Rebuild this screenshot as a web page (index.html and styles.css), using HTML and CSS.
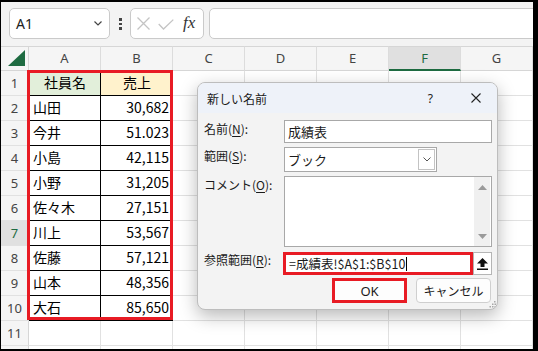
FILE: index.html
```html
<!DOCTYPE html>
<html lang="ja">
<head>
<meta charset="utf-8">
<title>新しい名前</title>
<link rel="stylesheet" href="styles.css">
</head>
<body>
<div class="frame">
  <div class="toolbar">
    <div class="namebox">
      <span class="ref">A1</span>
      <svg class="chev" width="8" height="5" viewBox="0 0 8 5"><polyline points="0.5,0.5 4,4 7.5,0.5" fill="none" stroke="#444" stroke-width="1.2"/></svg>
    </div>
    <div class="dots"><i></i><i></i><i></i></div>
    <div class="fxbox">
      <svg class="ico-x" width="13" height="13" viewBox="0 0 13 13"><path d="M0.5 0.5 L12.5 12.5 M12.5 0.5 L0.5 12.5" stroke="#c4c4c4" stroke-width="1.3" fill="none"/></svg>
      <svg class="ico-ok" width="16" height="11" viewBox="0 0 16 11"><polyline points="0.7,5 5.5,10 15.3,0.6" fill="none" stroke="#c4c4c4" stroke-width="1.3"/></svg>
      <span class="fx">fx</span>
    </div>
    <div class="formula"></div>
  </div>

  <div class="sheet">
    <div class="corner"><svg width="17" height="16" viewBox="0 0 17 16"><polygon points="17,0 17,16 0,16" fill="#1e6b41"/></svg></div>
    <div class="ch">A</div><div class="ch">B</div><div class="ch">C</div><div class="ch">D</div><div class="ch">E</div><div class="ch sel">F</div><div class="ch">G</div>

    <div class="rh">1</div><div class="c t hd ga">社員名</div><div class="c t hd gb">売上</div><div class="c"></div><div class="c"></div><div class="c"></div><div class="c"></div><div class="c"></div>
    <div class="rh">2</div><div class="c t">山田</div><div class="c t num">30,682</div><div class="c"></div><div class="c"></div><div class="c"></div><div class="c"></div><div class="c"></div>
    <div class="rh">3</div><div class="c t">今井</div><div class="c t num">51.023</div><div class="c"></div><div class="c"></div><div class="c"></div><div class="c"></div><div class="c"></div>
    <div class="rh">4</div><div class="c t">小島</div><div class="c t num">42,115</div><div class="c"></div><div class="c"></div><div class="c"></div><div class="c"></div><div class="c"></div>
    <div class="rh">5</div><div class="c t">小野</div><div class="c t num">31,205</div><div class="c"></div><div class="c"></div><div class="c"></div><div class="c"></div><div class="c"></div>
    <div class="rh">6</div><div class="c t">佐々木</div><div class="c t num">27,151</div><div class="c"></div><div class="c"></div><div class="c"></div><div class="c"></div><div class="c"></div>
    <div class="rh sel">7</div><div class="c t">川上</div><div class="c t num">53,567</div><div class="c"></div><div class="c"></div><div class="c"></div><div class="c"></div><div class="c"></div>
    <div class="rh">8</div><div class="c t">佐藤</div><div class="c t num">57,121</div><div class="c"></div><div class="c"></div><div class="c"></div><div class="c"></div><div class="c"></div>
    <div class="rh">9</div><div class="c t">山本</div><div class="c t num">48,356</div><div class="c"></div><div class="c"></div><div class="c"></div><div class="c"></div><div class="c"></div>
    <div class="rh">10</div><div class="c t">大石</div><div class="c t num">85,650</div><div class="c"></div><div class="c"></div><div class="c"></div><div class="c"></div><div class="c"></div>
    <div class="rh">11</div><div class="c"></div><div class="c"></div><div class="c"></div><div class="c"></div><div class="c"></div><div class="c"></div><div class="c"></div>
    <div class="rh"></div><div class="c"></div><div class="c"></div><div class="c"></div><div class="c"></div><div class="c"></div><div class="c"></div><div class="c"></div>
  </div>

  <div class="selbox"></div>

  <div class="dialog">
    <div class="dtitle">
      <span class="dname">新しい名前</span>
      <span class="help">?</span>
      <svg class="close" width="10" height="10" viewBox="0 0 10 10"><path d="M0.5 0.5 L9.5 9.5 M9.5 0.5 L0.5 9.5" stroke="#222" stroke-width="1.1" fill="none"/></svg>
    </div>
    <div class="dbody">
      <div class="row r1">
        <div class="lab">名前(<u>N</u>):</div>
        <div class="inp name">成績表</div>
      </div>
      <div class="row r2">
        <div class="lab">範囲(<u>S</u>):</div>
        <div class="inp scope">
          <span>ブック</span>
          <span class="ddbtn"><svg width="8" height="5" viewBox="0 0 8 5"><polyline points="0.5,0.5 4,4 7.5,0.5" fill="none" stroke="#555" stroke-width="1"/></svg></span>
        </div>
      </div>
      <div class="row r3">
        <div class="lab">コメント(<u>O</u>):</div>
        <div class="inp comment">
          <div class="sbar">
            <svg width="9" height="5" viewBox="0 0 9 5"><polygon points="4.5,0 9,5 0,5" fill="#9a9a9a"/></svg>
            <svg width="9" height="5" viewBox="0 0 9 5"><polygon points="0,0 9,0 4.5,5" fill="#9a9a9a"/></svg>
          </div>
        </div>
      </div>
      <div class="row r4">
        <div class="lab">参照範囲(<u>R</u>):</div>
        <div class="refbox"><span>=成績表!$A$1:$B$10</span><i class="caret"></i></div>
        <div class="colbtn"><svg width="11" height="12" viewBox="0 0 11 12"><polygon points="5.5,0 11,5.5 7.5,5.5 7.5,9 3.5,9 3.5,5.5 0,5.5" fill="#111"/><rect x="0" y="10.5" width="11" height="1.5" fill="#111"/></svg></div>
      </div>
      <div class="row r5">
        <div class="btn ok">OK</div>
        <div class="btn cancel">キャンセル</div>
      </div>
    </div>
    <svg class="grip" width="7" height="7" viewBox="0 0 7 7"><g fill="#a8a8a8"><rect x="5" y="0" width="1.5" height="1.5"/><rect x="3" y="2.5" width="1.5" height="1.5"/><rect x="5.5" y="2.5" width="1.5" height="1.5"/><rect x="0.5" y="5" width="1.5" height="1.5"/><rect x="3" y="5" width="1.5" height="1.5"/><rect x="5.5" y="5" width="1.5" height="1.5"/></g></svg>
  </div>
</div>
</body>
</html>
```
FILE: styles.css
```css
* { box-sizing: border-box; }
html, body { margin: 0; padding: 0; }
body {
  width: 538px;
  height: 351px;
  overflow: hidden;
  background: #fff;
  font-family: "Noto Sans CJK JP", "Noto Sans", sans-serif;
  color: #000;
}
.frame {
  position: relative;
  width: 538px;
  height: 351px;
  border-style: solid;
  border-color: #000;
  border-width: 2px 5px 2px 1px;
  overflow: hidden;
  background: #fff;
}

/* toolbar */
.toolbar {
  height: 44px;
  background: #f3f3f3;
  display: flex;
  align-items: flex-start;
  padding: 6px 0 0 8px;
  overflow: hidden;
}
.namebox {
  flex: none;
  width: 101px;
  height: 31px;
  background: #fff;
  border: 1px solid #cacaca;
  border-radius: 5px;
  display: flex;
  align-items: center;
  padding: 0 7px 0 6px;
}
.namebox .ref {
  font-family: "Noto Sans", sans-serif;
  font-size: 14px;
  color: #222;
}
.namebox .chev { margin-left: auto; }
.dots {
  flex: none;
  margin: 10px 0 0 9px;
  width: 3px;
  display: flex;
  flex-direction: column;
  gap: 2px;
}
.dots i { display: block; width: 2.5px; height: 2.5px; background: #444; }
.fxbox {
  flex: none;
  margin-left: 8px;
  width: 74px;
  height: 31px;
  background: #fff;
  border: 1px solid #cacaca;
  border-radius: 5px;
  display: flex;
  align-items: center;
  padding-left: 6px;
}
.fxbox .ico-ok { margin-left: 8px; margin-top: 1px; }
.fxbox .fx {
  margin-left: 9px;
  font-family: "Liberation Serif", serif;
  font-style: italic;
  font-size: 17px;
  color: #333;
  line-height: 1;
  margin-top: -2px;
}
.formula {
  flex: none;
  margin-left: 5px;
  width: 340px;
  height: 31px;
  background: #fff;
  border: 1px solid #cacaca;
  border-radius: 5px;
}

/* sheet */
.sheet {
  display: grid;
  grid-template-columns: 28px repeat(7, 72px);
  grid-auto-rows: 25px;
}
.corner {
  background: #f5f5f5;
  border-top: 1px solid #d6d6d6;
  border-bottom: 1px solid #d6d6d6;
  border-right: 1px solid #d6d6d6;
  padding: 3px 0 0 7px;
}
.corner svg { display: block; }
.ch {
  background: #f5f5f5;
  border-top: 1px solid #d6d6d6;
  border-bottom: 1px solid #d6d6d6;
  border-right: 1px solid #dcdcdc;
  text-align: center;
  font-family: "Noto Sans", sans-serif;
  font-size: 13px;
  line-height: 23px;
  color: #444;
}
.ch.sel {
  background: #e0e0e0;
  color: #1e6b41;
  border-bottom: 2px solid #1e6b41;
}
.rh {
  background: #f5f5f5;
  border-right: 1px solid #d6d6d6;
  border-bottom: 1px solid #e1e1e1;
  text-align: center;
  font-family: "Noto Sans", sans-serif;
  font-size: 13px;
  line-height: 24px;
  color: #444;
}
.rh.sel {
  background: #e0e0e0;
  color: #1e6b41;
}
.c {
  border-right: 1px solid #e1e1e1;
  border-bottom: 1px solid #e1e1e1;
  font-size: 14px;
  line-height: 23px;
  padding: 0 3px 0 4px;
  white-space: nowrap;
  overflow: hidden;
}
.c.t { border-color: #000; }
.c.hd { text-align: center; }
.c.ga { background: #e2efda; }
.c.gb { background: #fff2cc; }
.c.num { text-align: right; }

.selbox {
  position: absolute;
  left: 26px;
  top: 68px;
  width: 146px;
  height: 250px;
  border: 3px solid #e81b24;
}

/* dialog */
.dialog {
  position: absolute;
  left: 196px;
  top: 80px;
  width: 301px;
  height: 228px;
  background: #f3f3f3;
  border: 1px solid #bdbdbd;
  border-radius: 8px;
  box-shadow: 0 6px 18px rgba(0, 0, 0, 0.28);
  overflow: hidden;
  font-size: 12px;
  color: #1a1a1a;
}
.dtitle {
  height: 30px;
  background: #eef2f9;
  display: flex;
  align-items: center;
  padding-left: 9px;
}
.dtitle .help {
  margin-left: auto;
  font-family: "Noto Sans", sans-serif;
  font-size: 12px;
  color: #222;
}
.dtitle .close { margin: 0 16px 0 38px; }
.dbody { padding: 0 5px 0 6px; }
.row { display: flex; align-items: flex-start; }
.lab { flex: none; width: 80px; line-height: 18px; white-space: nowrap; }
.lab u { text-underline-offset: 2px; }
.r1 { margin-top: 7px; }
.r2 { margin-top: 4px; }
.r3 { margin-top: 4px; }
.r4 { margin-top: 5px; }
.r4 .lab { line-height: 16px; }
.r5 { margin-top: 3px; justify-content: flex-end; padding-right: 1px; gap: 9px; }
.inp {
  background: #fff;
  border: 1px solid #a8a8a8;
  font-size: 13px;
}
.inp.name {
  width: 208px;
  height: 23px;
  line-height: 21px;
  padding-left: 3px;
}
.inp.scope {
  width: 153px;
  height: 25px;
  line-height: 23px;
  padding-left: 3px;
  display: flex;
  align-items: stretch;
  padding-right: 1px;
}
.ddbtn {
  margin-left: auto;
  width: 17px;
  margin-top: 1px;
  margin-bottom: 1px;
  border: 1px solid #c3c3c3;
  background: #fff;
  display: flex;
  align-items: center;
  justify-content: center;
}
.inp.comment {
  width: 208px;
  height: 71px;
  display: flex;
  justify-content: flex-end;
  padding-right: 1px;
}
.sbar {
  width: 16px;
  background: #f0f0f0;
  display: flex;
  flex-direction: column;
  justify-content: space-between;
  align-items: center;
  padding: 8px 0 7px;
}
.sbar svg { display: block; }
.refbox {
  margin-left: -1px;
  width: 190px;
  height: 23px;
  background: #fff;
  border: 3px solid #e81b24;
  padding-left: 3px;
  font-size: 12.5px;
  line-height: 17px;
  display: flex;
  align-items: center;
  white-space: nowrap;
}
.caret { display: block; width: 1px; height: 14px; background: #000; margin-left: 1px; }
.colbtn {
  width: 19px;
  height: 23px;
  background: #fff;
  border: 1px solid #b5b5b5;
  display: flex;
  align-items: center;
  justify-content: center;
}
.colbtn svg { display: block; }
.btn {
  width: 75px;
  height: 25px;
  background: #fdfdfd;
  display: flex;
  align-items: center;
  justify-content: center;
}
.btn.ok {
  border: 3px solid #e81b24;
  font-family: "Noto Sans", sans-serif;
  font-size: 13px;
}
.btn.cancel {
  border: 1px solid #cfcfcf;
  border-radius: 4px;
  font-size: 12px;
}
.grip { position: absolute; right: 1px; bottom: 1px; display: block; }
```
